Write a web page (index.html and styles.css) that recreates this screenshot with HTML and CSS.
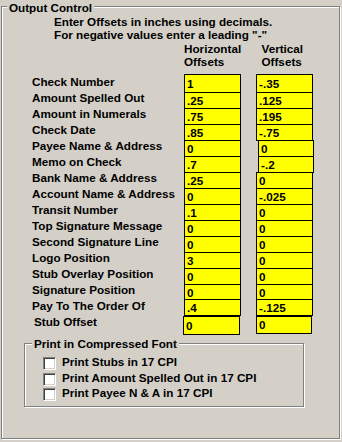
FILE: index.html
```html
<!DOCTYPE html>
<html>
<head>
<meta charset="utf-8">
<link rel="stylesheet" href="styles.css">
</head>
<body>
<div class="group outer">
  <div class="legend">Output Control</div>
  <p class="note">Enter Offsets in inches using decimals.<br>For negative values enter a leading "-"</p>
  <div class="heads">
    <div class="head">Horizontal<br>Offsets</div>
    <div class="head">Vertical<br>Offsets</div>
  </div>
  <div class="rows">
    <div class="row r-first"><span class="label">Check Number</span><input class="field f1" value="1"><input class="field f2" value="-.35"></div>
    <div class="row"><span class="label">Amount Spelled Out</span><input class="field f1" value=".25"><input class="field f2" value=".125"></div>
    <div class="row"><span class="label">Amount in Numerals</span><input class="field f1" value=".75"><input class="field f2" value=".195"></div>
    <div class="row"><span class="label">Check Date</span><input class="field f1" value=".85"><input class="field f2" value="-.75"></div>
    <div class="row"><span class="label">Payee Name &amp; Address</span><input class="field f1" value="0"><input class="field f2 shifted" value="0"></div>
    <div class="row"><span class="label">Memo on Check</span><input class="field f1" value=".7"><input class="field f2 shifted" value="-.2"></div>
    <div class="row"><span class="label">Bank Name &amp; Address</span><input class="field f1" value=".25"><input class="field f2" value="0"></div>
    <div class="row"><span class="label">Account Name &amp; Address</span><input class="field f1" value="0"><input class="field f2" value="-.025"></div>
    <div class="row"><span class="label">Transit Number</span><input class="field f1" value=".1"><input class="field f2" value="0"></div>
    <div class="row"><span class="label">Top Signature Message</span><input class="field f1" value="0"><input class="field f2" value="0"></div>
    <div class="row"><span class="label">Second Signature Line</span><input class="field f1" value="0"><input class="field f2" value="0"></div>
    <div class="row"><span class="label">Logo Position</span><input class="field f1" value="3"><input class="field f2" value="0"></div>
    <div class="row"><span class="label">Stub Overlay Position</span><input class="field f1" value="0"><input class="field f2" value="0"></div>
    <div class="row"><span class="label">Signature Position</span><input class="field f1" value="0"><input class="field f2" value="0"></div>
    <div class="row r-payto"><span class="label">Pay To The Order Of</span><input class="field f1" value=".4"><input class="field f2" value="-.125"></div>
    <div class="row r-stub"><span class="label">Stub Offset</span><input class="field f1" value="0"><input class="field f2" value="0"></div>
  </div>
  <div class="group inner">
    <div class="legend">Print in Compressed Font</div>
    <label class="check"><input type="checkbox" class="box"><span>Print Stubs in 17 CPI</span></label>
    <label class="check"><input type="checkbox" class="box"><span>Print Amount Spelled Out in 17 CPI</span></label>
    <label class="check"><input type="checkbox" class="box"><span>Print Payee N &amp; A in 17 CPI</span></label>
  </div>
</div>
</body>
</html>
```
FILE: styles.css
```css
html, body {
  margin: 0;
  padding: 0;
  background: #d4d0c8;
}
body {
  width: 342px;
  height: 442px;
  overflow: hidden;
  font-family: "Liberation Sans", Arial, sans-serif;
  font-weight: bold;
  font-size: 11.7px;
  line-height: 13px;
  color: #000;
}
.group {
  box-sizing: border-box;
  border: 1px solid #808080;
  box-shadow: inset 1px 1px #fff, 1px 1px #fff;
}
.outer {
  margin: 6px 0 0 1px;
  width: 339px;
  height: 433px;
}
.legend {
  width: fit-content;
  background: #d4d0c8;
  padding: 0 2px;
  line-height: 13px;
  white-space: nowrap;
}
.outer > .legend {
  margin: -6px 0 0 5px;
}
.note {
  margin: 1px 0 0 0;
  padding-left: 52px;
  white-space: nowrap;
}
.heads {
  display: flex;
  margin-top: 1px;
  padding-left: 182px;
}
.head {
  width: 80px;
}
.rows {
  margin-top: 7px;
  padding-left: 30px;
}
.row {
  display: flex;
  align-items: flex-start;
  height: 16px;
}
.label {
  width: 152px;
  white-space: nowrap;
  line-height: 13px;
}
.field {
  box-sizing: border-box;
  display: block;
  width: 57px;
  height: 17px;
  margin: 1px 0 0 0;
  padding: 0 0 1px 2px;
  border: 1px solid #000;
  border-radius: 0;
  background: #ffff00;
  font: inherit;
  line-height: 13px;
  color: #000;
  outline: none;
}
.f1 {
  margin-right: 15px;
}
.f2.shifted {
  margin-left: 2px;
  width: 56px;
}
.r-first .field {
  margin-top: -1px;
  height: 19px;
  padding-top: 1px;
}
.r-payto .field {
  margin-top: 0;
}
.r-stub .label {
  padding-left: 2px;
  width: 150px;
}
.r-stub .f1 {
  margin-left: -1px;
  margin-right: 16px;
  height: 19px;
  padding-top: 1px;
}
.r-stub .f2 {
  width: 56px;
  height: 18px;
}
.inner {
  margin: 12px 0 0 22px;
  width: 280px;
  height: 64px;
}
.inner > .legend {
  margin: -7px 0 5px 7px;
}
.check {
  display: flex;
  align-items: flex-start;
  height: 15.5px;
  padding-left: 18px;
  white-space: nowrap;
}
.box {
  appearance: none;
  -webkit-appearance: none;
  box-sizing: border-box;
  width: 13px;
  height: 13px;
  margin: 2px 6px 0 0;
  background: #fff;
  border-top: 1px solid #808080;
  border-left: 1px solid #808080;
  border-right: 1px solid #fff;
  border-bottom: 1px solid #fff;
  box-shadow: inset 1px 1px #404040, inset -1px -1px #d4d0c8;
  border-radius: 0;
}
```
